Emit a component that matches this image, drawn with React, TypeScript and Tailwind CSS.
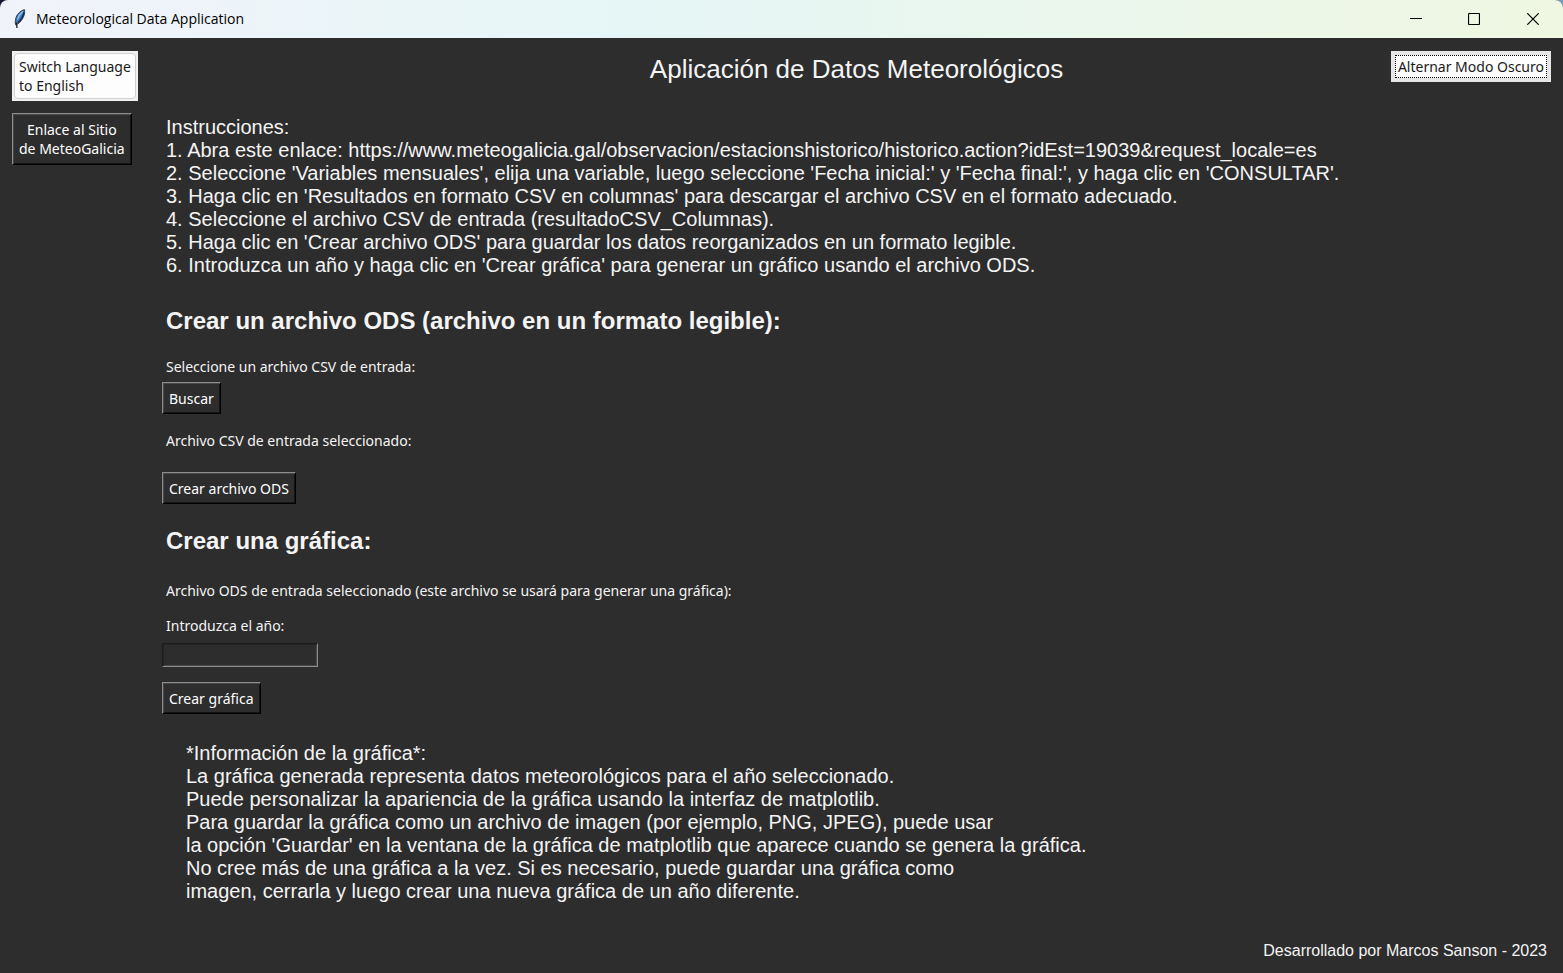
import type { ReactNode } from "react";

const instructions = [
  "Instrucciones:",
  "1. Abra este enlace: https://www.meteogalicia.gal/observacion/estacionshistorico/historico.action?idEst=19039&request_locale=es",
  "2. Seleccione 'Variables mensuales', elija una variable, luego seleccione 'Fecha inicial:' y 'Fecha final:', y haga clic en 'CONSULTAR'.",
  "3. Haga clic en 'Resultados en formato CSV en columnas' para descargar el archivo CSV en el formato adecuado.",
  "4. Seleccione el archivo CSV de entrada (resultadoCSV_Columnas).",
  "5. Haga clic en 'Crear archivo ODS' para guardar los datos reorganizados en un formato legible.",
  "6. Introduzca un año y haga clic en 'Crear gráfica' para generar un gráfico usando el archivo ODS.",
];

const chartInfo = [
  "*Información de la gráfica*:",
  "La gráfica generada representa datos meteorológicos para el año seleccionado.",
  "Puede personalizar la apariencia de la gráfica usando la interfaz de matplotlib.",
  "Para guardar la gráfica como un archivo de imagen (por ejemplo, PNG, JPEG), puede usar",
  "la opción 'Guardar' en la ventana de la gráfica de matplotlib que aparece cuando se genera la gráfica.",
  "No cree más de una gráfica a la vez. Si es necesario, puede guardar una gráfica como",
  "imagen, cerrarla y luego crear una nueva gráfica de un año diferente.",
];

function FeatherIcon() {
  return (
    <svg width="16" height="20" viewBox="0 0 16 20" aria-hidden="true">
      <path d="M12.400 0.600C9 1.500 5.500 4.500 4.200 8C3.200 11 3 13.500 3.600 15.800C6.500 15.200 9.500 12 11.200 8.500C12.600 5.500 13 3 12.400 0.600Z" fill="#3b7cc4" stroke="#3b3f48" strokeWidth="1" />
      <path d="M10.800 2.600C8.500 4.500 6.500 7.500 5.500 10.500" fill="none" stroke="#8fbdec" strokeWidth="1.400" />
      <path d="M12 3C11.700 6 9.500 10 6 13.800" fill="none" stroke="#1c2a42" strokeWidth="1.400" />
      <path d="M4.400 13.500L5 19" fill="none" stroke="#25272b" strokeWidth="1.400" />
    </svg>
  );
}

function RaisedButton({ children }: { children: ReactNode }) {
  return (
    <button
      type="button"
      className="block min-h-8 border border-t-[#8c8c8c] border-r-black border-b-black border-l-[#8c8c8c] bg-[#2d2d2d] px-[6px] text-center leading-[19px] text-white shadow-[inset_1px_1px_0_#484848,inset_-1px_-1px_0_#141414]"
    >
      {children}
    </button>
  );
}

function TextBlock({ lines }: { lines: string[] }) {
  return (
    <div className="font-['Liberation_Sans',sans-serif] text-[20px] leading-[23px]">
      {lines.map((line) => (
        <p key={line}>{line}</p>
      ))}
    </div>
  );
}

export default function App() {
  return (
    <div className="min-h-screen bg-linear-to-r from-[#1a1433] to-[#6f9fc4]">
      <div className="flex min-h-screen flex-col overflow-hidden rounded-t-lg bg-[#2d2d2d] font-['Noto_Sans',sans-serif] text-[14px] text-[#f4f4f4]">
        <header className="flex h-[38px] items-center bg-linear-to-r from-[#f1f3fa] via-[#e6f6f6] via-40% to-[#eff7e2] text-black">
          <div className="flex flex-1 items-center gap-2 pl-3">
            <FeatherIcon />
            <span className="font-['Open_Sans',sans-serif] leading-[18px]">Meteorological Data Application</span>
          </div>
          <button type="button" aria-label="Minimizar" className="flex h-full w-[58px] items-center justify-center">
            <svg width="12" height="12" viewBox="0 0 12 12"><path d="M0 5.500H12" stroke="black" /></svg>
          </button>
          <button type="button" aria-label="Maximizar" className="flex h-full w-[58px] items-center justify-center">
            <svg width="12" height="12" viewBox="0 0 12 12"><rect x="0.500" y="0.500" width="11" height="11" rx="1" fill="none" stroke="black" strokeWidth="1.200" /></svg>
          </button>
          <button type="button" aria-label="Cerrar" className="flex h-full w-[60px] items-center justify-center">
            <svg width="12" height="12" viewBox="0 0 12 12"><path d="M0.300 0.300L11.700 11.700M11.700 0.300L0.300 11.700" stroke="black" strokeWidth="1.200" /></svg>
          </button>
        </header>

        <div className="flex flex-1 px-3 pt-[13px]">
          <aside className="flex w-[150px] shrink-0 flex-col items-start gap-3">
            <button type="button" className="border border-[#f0f0f0] bg-[#f0f0f0] p-px text-left leading-[19px] text-[#1a1a1a]">
              <span className="block rounded-[4px] border border-[#d0d0d0] bg-[#fdfdfd] px-1 py-[3px]">
                Switch Language
                <br />
                to English
              </span>
            </button>
            <RaisedButton>
              <span className="block py-[6px]">
                Enlace al Sitio
                <br />
                de MeteoGalicia
              </span>
            </RaisedButton>
          </aside>

          <main className="flex min-w-0 flex-1 flex-col">
            <div className="grid grid-cols-[1fr_auto_1fr] items-center">
              <h1 className="col-start-2 font-['Liberation_Sans',sans-serif] text-[26px] leading-[37px]">
                Aplicación de Datos Meteorológicos
              </h1>
              <button type="button" className="self-start justify-self-end bg-[#e6e6e6] p-1 leading-[21px] text-[#1a1a1a]">
                <span className="block border border-dotted border-black bg-[#fdfdfd] px-[2px]">Alternar Modo Oscuro</span>
              </button>
            </div>

            <section className="mt-7 pl-1">
              <TextBlock lines={instructions} />
            </section>

            <section className="mt-7 flex flex-col items-start">
              <h2 className="pl-1 font-['Liberation_Sans',sans-serif] text-[24px] leading-8 font-bold">
                Crear un archivo ODS (archivo en un formato legible):
              </h2>
              <p className="mt-5 pl-1 leading-5">Seleccione un archivo CSV de entrada:</p>
              <div className="mt-[5px]">
                <RaisedButton>Buscar</RaisedButton>
              </div>
              <p className="mt-[17px] pl-1 leading-5">Archivo CSV de entrada seleccionado:</p>
              <div className="mt-[21px]">
                <RaisedButton>Crear archivo ODS</RaisedButton>
              </div>
            </section>

            <section className="mt-[21px] flex flex-col items-start">
              <h2 className="pl-1 font-['Liberation_Sans',sans-serif] text-[24px] leading-8 font-bold">
                Crear una gráfica:
              </h2>
              <p className="mt-6 pl-1 leading-5">
                Archivo ODS de entrada seleccionado (este archivo se usará para generar una gráfica):
              </p>
              <label htmlFor="year" className="mt-[15px] pl-1 leading-5">
                Introduzca el año:
              </label>
              <input
                id="year"
                type="text"
                className="mt-[7px] h-6 w-[156px] border border-t-[#1c1c1c] border-r-[#8c8c8c] border-b-[#8c8c8c] border-l-[#1c1c1c] bg-[#2d2d2d] px-1 text-white shadow-[inset_1px_1px_0_#242424,inset_-1px_-1px_0_#484848] outline-none"
              />
              <div className="mt-[15px]">
                <RaisedButton>Crear gráfica</RaisedButton>
              </div>
            </section>

            <section className="mt-7 pl-6">
              <TextBlock lines={chartInfo} />
            </section>
          </main>
        </div>

        <footer className="px-4 pb-3 text-right font-['Liberation_Sans',sans-serif] text-[16px] leading-5">
          Desarrollado por Marcos Sanson - 2023
        </footer>
      </div>
    </div>
  );
}
